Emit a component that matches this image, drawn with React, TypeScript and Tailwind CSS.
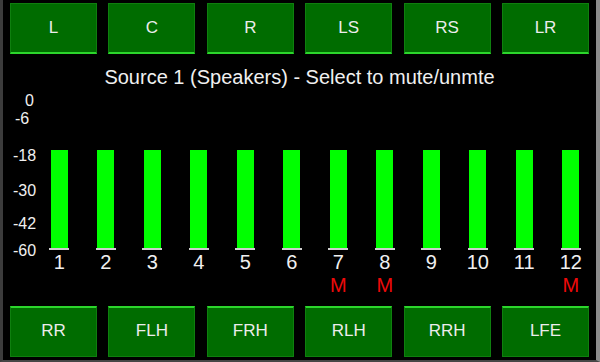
const topButtons = ["L", "C", "R", "LS", "RS", "LR"];
const bottomButtons = ["RR", "FLH", "FRH", "RLH", "RRH", "LFE"];

const scale = [
  { label: "0", top: "top-[6px]", left: "left-[22px]" },
  { label: "-6", top: "top-[24px]", left: "left-[12px]" },
  { label: "-18", top: "top-[61px]", left: "left-[10px]" },
  { label: "-30", top: "top-[96px]", left: "left-[10px]" },
  { label: "-42", top: "top-[129px]", left: "left-[10px]" },
  { label: "-60", top: "top-[156px]", left: "left-[10px]" },
];

const channels = [
  { n: 1, muted: false },
  { n: 2, muted: false },
  { n: 3, muted: false },
  { n: 4, muted: false },
  { n: 5, muted: false },
  { n: 6, muted: false },
  { n: 7, muted: true },
  { n: 8, muted: true },
  { n: 9, muted: false },
  { n: 10, muted: false },
  { n: 11, muted: false },
  { n: 12, muted: true },
];

const ChannelButton = ({ label, bottom }: { label: string; bottom?: boolean }) => (
  <button
    className={
      bottom
        ? "h-[51px] bg-[#006c00] border border-[#0f7f0f] border-t-2 border-t-[#2cd62c] pb-[3px] text-[17px] text-[#ececec]"
        : "h-[51px] bg-[#006c00] border border-[#0f7f0f] border-b-2 border-b-[#2cd62c] text-[17px] text-[#ececec]"
    }
  >
    {label}
  </button>
);

const App = () => {
  return (
    <div
      className="w-[600px] h-[362px] bg-black flex flex-col border-l-[3px] border-l-[#3c3c3c] border-r-4 border-r-[#8c8c8c] border-b-2 border-b-[#464646]"
      style={{ fontFamily: '"Liberation Sans", Arial, sans-serif' }}
    >
      <div className="grid grid-cols-6 gap-x-[11.4px] px-[7px] pt-[3px]">
        {topButtons.map((b) => (
          <ChannelButton key={b} label={b} />
        ))}
      </div>

      <p className="mt-[13px] h-[20px] leading-[20px] text-[20px] text-center text-[#f0f0f0]">
        Source 1 (Speakers) - Select to mute/unmte
      </p>

      <div className="relative h-[219px]">
        {scale.map((s) => (
          <span
            key={s.label}
            className={`absolute ${s.top} ${s.left} text-[16px] leading-[16px] text-[#f0f0f0]`}
          >
            {s.label}
          </span>
        ))}
        <div className="ml-[33px] pt-[63px] flex">
          {channels.map((c) => (
            <div key={c.n} className="w-[46.5px] flex flex-col items-center">
              <div className="w-[17px] h-[98px] bg-[#00ff00]" />
              <div className="w-[20px] h-[2px] bg-[#cfcfcf]" />
              <span className="mt-[2px] text-[20px] leading-[20px] text-[#f0f0f0]">{c.n}</span>
              {c.muted && (
                <span className="mt-[3px] text-[20px] leading-[20px] text-[#ee0a0a]">M</span>
              )}
            </div>
          ))}
        </div>
      </div>

      <div className="grid grid-cols-6 gap-x-[11.4px] px-[7px]">
        {bottomButtons.map((b) => (
          <ChannelButton key={b} label={b} bottom />
        ))}
      </div>
    </div>
  );
};

export default App;
